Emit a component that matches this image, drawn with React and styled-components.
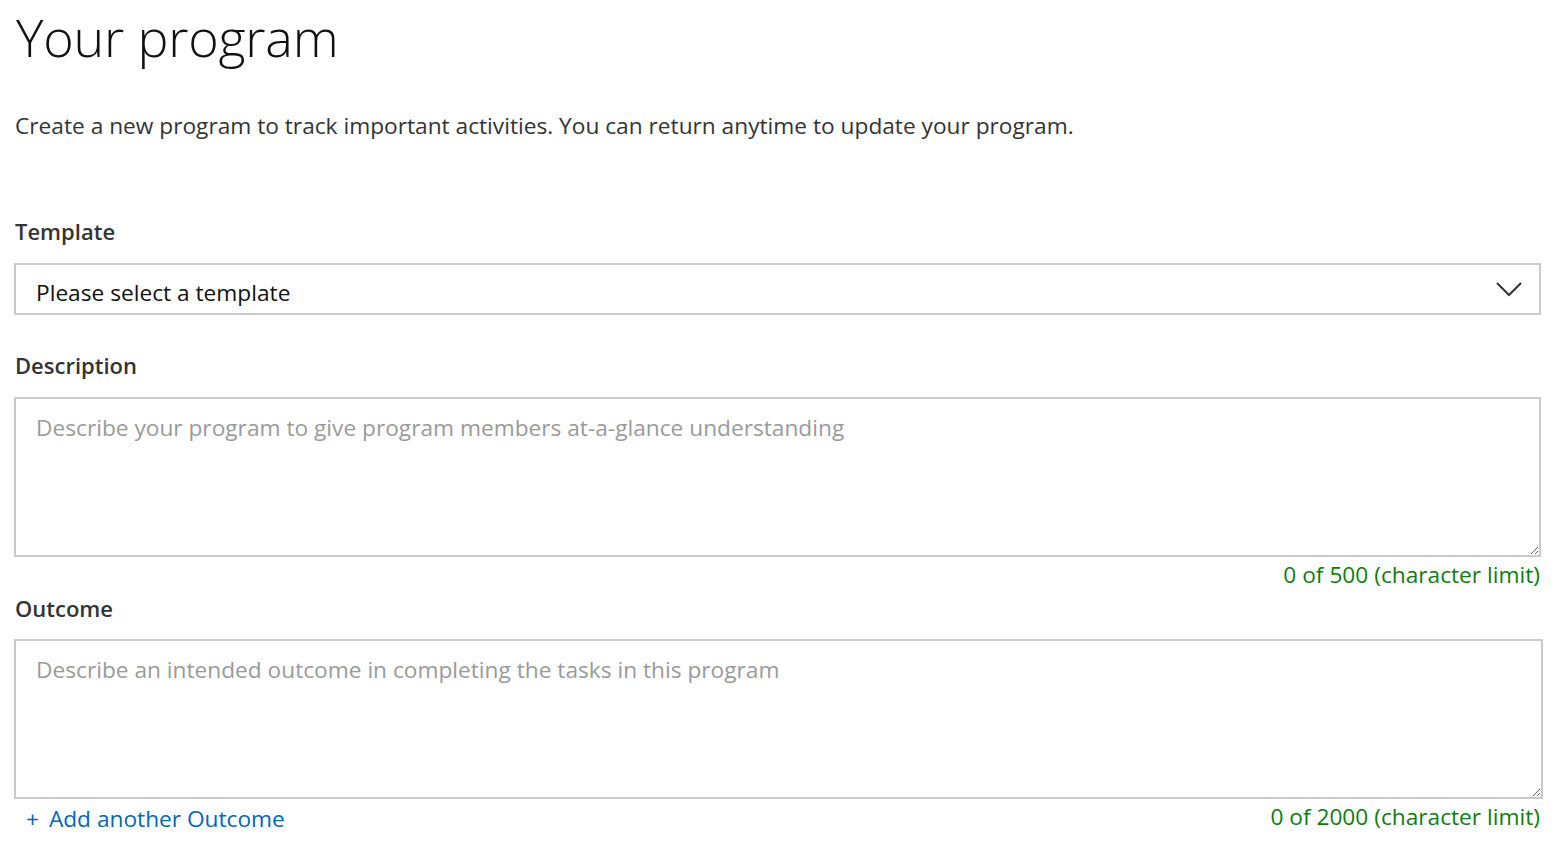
import React from "react";
import styled, { createGlobalStyle } from "styled-components";

const Global = createGlobalStyle`
  html, body { margin: 0; padding: 0; background: #fff; }
  body { font-family: "Open Sans", "Noto Sans", sans-serif; }
  * { box-sizing: border-box; }
`;

const Page = styled.main`
  padding: 0 21px 0 14px;
  display: flex;
  flex-direction: column;
`;

const Title = styled.h1`
  margin: 0 0 0 2px;
  padding-top: 2px;
  font-size: 52px;
  font-weight: 300;
  line-height: 70px;
  color: #111;
  letter-spacing: -0.2px;
`;

const Intro = styled.p`
  margin: 39px 0 0 1px;
  font-size: 22.7px;
  line-height: 30px;
  color: #333;
`;

const Field = styled.section`
  display: flex;
  flex-direction: column;
  margin-top: ${(p) => p.$top || 0}px;
`;

const Label = styled.label`
  font-size: 22px;
  font-weight: 600;
  color: #333;
  line-height: 30px;
  margin: 0 0 ${(p) => p.$gap || 16}px 1px;
`;

const SelectBox = styled.div`
  position: relative;
  height: 52px;
  border: 2px solid #cacaca;
  display: flex;
  align-items: center;
  padding: 6px 20px 0;
  font-size: 22.7px;
  color: #111;
`;

const Chevron = styled.svg`
  position: absolute;
  right: 17px;
  top: 16px;
`;

const Area = styled.textarea`
  display: block;
  width: calc(100% + ${(p) => p.$extra || 0}px);
  height: 160px;
  border: 2px solid #cacaca;
  padding: 14px 20px;
  font-family: "Open Sans", "Noto Sans", sans-serif;
  font-size: 22.7px;
  line-height: 30px;
  color: #111;
  resize: vertical;
  outline: none;
  &::placeholder { color: #9a9a9a; }
`;

const Footer = styled.div`
  display: flex;
  justify-content: ${(p) => (p.$split ? "space-between" : "flex-end")};
  align-items: flex-start;
  margin-top: 3px;
  padding-right: 1px;
  line-height: 30px;
`;

const Counter = styled.span`
  font-size: 22.7px;
  color: #107c10;
`;

const AddLink = styled.a`
  font-size: 22.7px;
  color: #0067b8;
  text-decoration: none;
  margin-left: 12px;
  padding-top: 2px;
  cursor: pointer;
`;

const Plus = styled.span`
  margin-right: 4px;
`;

export default function App() {
  return (
    <>
      <Global />
      <Page>
        <Title>Your program</Title>
        <Intro>
          Create a new program to track important activities. You can return anytime to update your program.
        </Intro>
        <Field $top={75}>
          <Label $gap={17}>Template</Label>
          <SelectBox>
            Please select a template
            <Chevron width="26" height="16" viewBox="0 0 26 16" fill="none">
              <path d="M1 2 L13 14 L25 2" stroke="#333" strokeWidth="2" />
            </Chevron>
          </SelectBox>
        </Field>
        <Field $top={35}>
          <Label $gap={17}>Description</Label>
          <Area placeholder="Describe your program to give program members at-a-glance understanding" />
          <Footer>
            <Counter>0 of 500 (character limit)</Counter>
          </Footer>
        </Field>
        <Field $top={3}>
          <Label $gap={16}>Outcome</Label>
          <Area $extra={2} placeholder="Describe an intended outcome in completing the tasks in this program" />
          <Footer $split>
            <AddLink><Plus>+</Plus> Add another Outcome</AddLink>
            <Counter>0 of 2000 (character limit)</Counter>
          </Footer>
        </Field>
      </Page>
    </>
  );
}
